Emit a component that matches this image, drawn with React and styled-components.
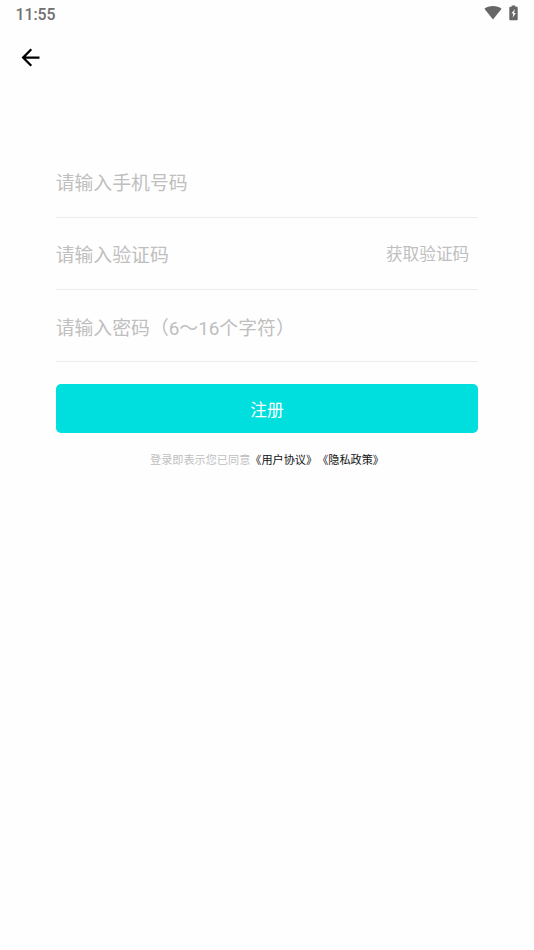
import { useState } from "react";
import styled, { createGlobalStyle } from "styled-components";

const GlobalStyle = createGlobalStyle`
  * {
    box-sizing: border-box;
  }
  body {
    margin: 0;
    background: #fefefe;
    font-family: Roboto, "Noto Sans CJK SC", sans-serif;
    text-spacing-trim: space-all;
  }
`;

const Page = styled.div`
  width: 100%;
  min-height: 950px;
  background: #fefefe;
`;

const StatusBar = styled.div`
  display: flex;
  justify-content: space-between;
  align-items: center;
  height: 27px;
  padding: 0 16px 0 15.5px;
`;

const Clock = styled.span`
  padding-top: 2px;
  color: #707070;
  font-size: 15.8px;
  font-weight: 500;
  line-height: 26px;
`;

const StatusIcons = styled.div`
  display: flex;
  align-items: center;
  gap: 7px;
  height: 26px;
  margin-bottom: 2px;

  svg {
    display: block;
  }
`;

const NavBar = styled.header`
  display: flex;
  align-items: center;
  height: 61px;
  padding-left: 17px;
`;

const BackButton = styled.button`
  width: 27px;
  height: 27px;
  padding: 0;
  border: 0;
  background: none;

  svg {
    display: block;
  }
`;

const Form = styled.form`
  padding: 57.4px 55.7px 0;
`;

const Field = styled.div`
  display: flex;
  align-items: center;
  height: 72.3px;
  padding: 4px 9px 0 0;
  border-bottom: 1px solid #ebebeb;
`;

const Input = styled.input`
  flex: 1;
  min-width: 0;
  height: 28px;
  padding: 2px 0 0;
  border: 0;
  outline: none;
  background: none;
  color: #333;
  font-family: inherit;
  font-size: 18.85px;
  text-spacing-trim: space-all;

  &::placeholder {
    color: #bfbfbf;
    opacity: 1;
  }
`;

const CodeButton = styled.button`
  padding: 0;
  border: 0;
  background: none;
  color: #bfbfbf;
  font-family: inherit;
  font-size: 16.7px;
  line-height: 24px;
`;

const SubmitButton = styled.button`
  display: block;
  width: 100%;
  height: 49px;
  margin-top: 22px;
  padding: 1px 0 0;
  border: 0;
  border-radius: 5px;
  background: #00dfde;
  color: #fff;
  font-family: inherit;
  font-size: 16.7px;
`;

const Agreement = styled.p`
  margin: 18.3px 0 0;
  color: #bfbfbf;
  font-size: 11.15px;
  line-height: 18px;
  text-align: center;
  white-space: nowrap;
`;

const AgreementLink = styled.span`
  color: #111;
`;

const WifiIcon = () => (
  <svg width="18" height="15" viewBox="0 0 18 15">
    <path d="M9 14.6 0.4 3.8C2.7 2 5.7 1 9 1s6.3 1 8.6 2.8z" fill="#666" />
  </svg>
);

const BatteryIcon = () => (
  <svg width="9" height="16" viewBox="0 0 9 16">
    <path d="M2.7 0.4h3.6v1.4h1.5q0.9 0 0.9 0.9v11.6q0 0.9-0.9 0.9H1.2q-0.9 0-0.9-0.9V2.7q0-0.9 0.9-0.9h1.5z" fill="#666" />
    <path d="M5.9 4 2.4 8.6h2L3.6 12.8 6.9 7.9H5z" fill="#fff" />
  </svg>
);

const BackIcon = () => (
  <svg width="27" height="27" viewBox="0 0 24 24">
    <path d="M20 11H7.83l5.59-5.59L12 4l-8 8 8 8 1.41-1.41L7.83 13H20v-2z" fill="#000" />
  </svg>
);

const App = () => {
  const [form, setForm] = useState({ phone: "", code: "", password: "" });

  const onChange = (e) => {
    setForm({ ...form, [e.target.name]: e.target.value });
  };

  return (
    <>
      <GlobalStyle />
      <Page>
        <StatusBar>
          <Clock>11:55</Clock>
          <StatusIcons>
            <WifiIcon />
            <BatteryIcon />
          </StatusIcons>
        </StatusBar>
        <NavBar>
          <BackButton type="button">
            <BackIcon />
          </BackButton>
        </NavBar>
        <Form onSubmit={(e) => e.preventDefault()}>
          <Field>
            <Input name="phone" value={form.phone} onChange={onChange} placeholder="请输入手机号码" />
          </Field>
          <Field>
            <Input name="code" value={form.code} onChange={onChange} placeholder="请输入验证码" />
            <CodeButton type="button">获取验证码</CodeButton>
          </Field>
          <Field>
            <Input
              name="password"
              type="password"
              value={form.password}
              onChange={onChange}
              placeholder="请输入密码（6～16个字符）"
            />
          </Field>
          <SubmitButton>注册</SubmitButton>
          <Agreement>
            登录即表示您已同意
            <AgreementLink>《用户协议》</AgreementLink>
            <AgreementLink>《隐私政策》</AgreementLink>
          </Agreement>
        </Form>
      </Page>
    </>
  );
};

export default App;
